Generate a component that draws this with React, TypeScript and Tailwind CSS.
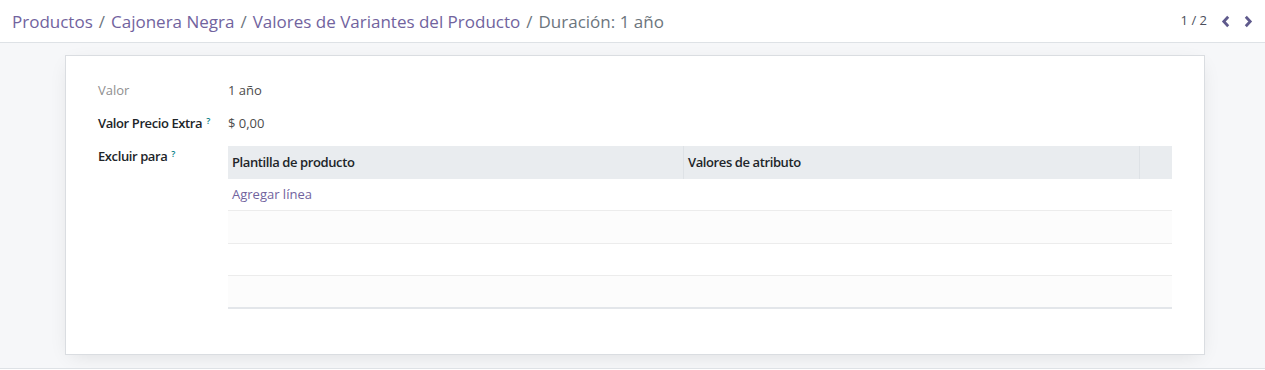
import React from "react";

const Chevron = ({ dir }: { dir: "left" | "right" }) => (
  <svg width="10" height="13" viewBox="0 0 10 13" className="block">
    {dir === "left" ? (
      <polyline points="7.2,1.8 2.8,6.5 7.2,11.2" fill="none" stroke="#5f5a8c" strokeWidth="2.8" strokeLinejoin="miter" strokeLinecap="butt" />
    ) : (
      <polyline points="2.8,1.8 7.2,6.5 2.8,11.2" fill="none" stroke="#5f5a8c" strokeWidth="2.8" strokeLinejoin="miter" strokeLinecap="butt" />
    )}
  </svg>
);

export default function App() {
  const font = { fontFamily: '"Open Sans", "Noto Sans", sans-serif' };
  return (
    <div className="w-full h-[370px] bg-[#f6f7f9] overflow-hidden flex flex-col" style={font}>
      {/* control panel */}
      <div className="h-[43px] shrink-0 bg-white border-b border-[#dee2e6] flex items-center justify-between pl-[12px] pr-[12px]">
        <div className="text-[17px] flex items-center gap-[6px] leading-none">
          <span className="text-[#71639e]">Productos</span>
          <span className="text-[#6c757d]">/</span>
          <span className="text-[#71639e]">Cajonera Negra</span>
          <span className="text-[#6c757d]">/</span>
          <span className="text-[#71639e]">Valores de Variantes del Producto</span>
          <span className="text-[#6c757d]">/</span>
          <span className="text-[#6c757d]">Duración: 1 año</span>
        </div>
        <div className="flex items-center">
          <span className="text-[13px] text-[#4b4f5c] mr-[14px]">1 / 2</span>
          <span className="mr-[12px]"><Chevron dir="left" /></span>
          <span><Chevron dir="right" /></span>
        </div>
      </div>

      {/* sheet area */}
      <div className="flex-1 pt-[12px] pl-[65px]">
        <div className="w-[1140px] h-[300px] bg-white border border-[#dadde1] shadow-[0_5px_20px_-6px_rgba(0,0,0,0.12)] pl-[32px] pr-[32px] pt-[25px] text-[13px]">
          <div className="flex items-center h-[20px]">
            <div className="w-[130px] text-[#8f8f8f]">Valor</div>
            <div className="text-[#4c4c4c]">1 año</div>
          </div>
          <div className="flex items-center h-[20px] mt-[13px]">
            <div className="w-[130px] text-[#212529] font-semibold tracking-[-0.4px]">
              Valor Precio Extra<sup className="text-[#017e84] font-semibold text-[9px] ml-[4px]">?</sup>
            </div>
            <div className="text-[#4c4c4c]">$ 0,00</div>
          </div>
          <div className="flex mt-[3px]">
            <div className="w-[130px] shrink-0 text-[#212529] font-semibold tracking-[-0.4px] pt-[10px]">
              Excluir para<sup className="text-[#017e84] font-semibold text-[9px] ml-[4px]">?</sup>
            </div>
            <div className="flex-1 mt-[9px]">
              <div className="flex h-[33px] bg-[#e9ecef] text-[#212529] font-semibold tracking-[-0.4px]">
                <div className="w-[456px] border-r border-[#dee2e6] flex items-center pl-[4px]">Plantilla de producto</div>
                <div className="w-[456px] border-r border-[#dee2e6] flex items-center pl-[4px]">Valores de atributo</div>
                <div className="flex-1"></div>
              </div>
              <div className="h-[32px] border-b border-[#ececec] flex items-center pl-[4px] text-[#71639e]">Agregar línea</div>
              <div className="h-[33px] border-b border-[#ececec] bg-[#fcfcfc]"></div>
              <div className="h-[32px] border-b border-[#ececec]"></div>
              <div className="h-[33px] border-b-2 border-[#e3e6ea] bg-[#fcfcfc]"></div>
            </div>
          </div>
        </div>
      </div>
      <div className="h-[2px] border-t border-[#dee2e6] bg-white"></div>
    </div>
  );
}
